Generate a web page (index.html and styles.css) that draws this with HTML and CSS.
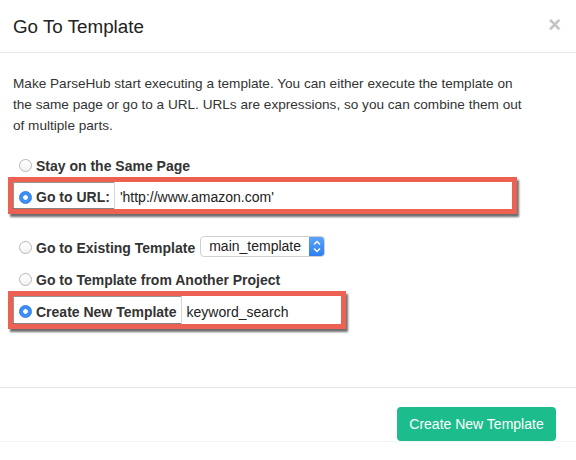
FILE: index.html
```html
<!DOCTYPE html>
<html>
<head>
<meta charset="utf-8">
<link rel="stylesheet" href="styles.css">
</head>
<body>
<div class="modal">
  <div class="header">
    <h4 class="title">Go To Template</h4>
    <span class="close">×</span>
  </div>
  <div class="body">
    <p class="intro">Make ParseHub start executing a template. You can either execute the template on the same page or go to a URL. URLs are expressions, so you can combine them out of multiple parts.</p>
    <div class="row row-stay">
      <span class="radio"></span><span class="label">Stay on the Same Page</span>
    </div>
    <div class="row hl hl-url">
      <span class="radio on"></span><span class="label">Go to URL:</span>
      <span class="input grow">'http://www.amazon.com'</span>
    </div>
    <div class="row row-existing">
      <span class="radio"></span><span class="label">Go to Existing Template</span>
      <span class="select"><span class="sel-text">main_template</span><span class="stepper"><svg width="16" height="21" viewBox="0 0 16 21"><path d="M5 8.5 L8 5.5 L11 8.5" fill="none" stroke="#fff" stroke-width="1.4"/><path d="M5 12.5 L8 15.5 L11 12.5" fill="none" stroke="#fff" stroke-width="1.4"/></svg></span></span>
    </div>
    <div class="row row-another">
      <span class="radio"></span><span class="label">Go to Template from Another Project</span>
    </div>
    <div class="row hl hl-new">
      <span class="radio on"></span><span class="label">Create New Template</span>
      <span class="input grow">keyword_search</span>
    </div>
  </div>
  <div class="footer">
    <button class="btn">Create New Template</button>
  </div>
</div>
</body>
</html>
```
FILE: styles.css
```css
html, body {
  margin: 0;
  padding: 0;
  background: #fff;
}
body {
  font-family: "Liberation Sans", Arial, Helvetica, sans-serif;
  color: #333;
  width: 576px;
  height: 460px;
  overflow: hidden;
}
.modal {
  width: 576px;
}
.header {
  height: 53px;
  border-bottom: 1px solid #e8e8e8;
  display: flex;
  align-items: center;
  justify-content: space-between;
  padding: 0 15px 0 13px;
  box-sizing: border-box;
}
.title {
  margin: 0;
  font-size: 18.8px;
  font-weight: normal;
  color: #222;
  padding-top: 2px;
}
.close {
  font-size: 22px;
  font-weight: bold;
  color: #c4c4c4;
  line-height: 1;
  margin-top: -2px;
}
.body {
  padding: 20px 13px 0 13px;
  height: 332px;
  box-sizing: border-box;
}
.intro {
  margin: 0;
  max-width: 516px;
  font-size: 13.6px;
  line-height: 21px;
  color: #333;
}
.row {
  display: flex;
  align-items: center;
  height: 26px;
  padding-left: 6px;
  padding-top: 3px;
  box-sizing: border-box;
}
.row-stay { margin-top: 15px; }
.row-existing { margin-top: 19px; }
.row-another { margin-top: 6px; }
.hl {
  margin-left: -5px;
  border: 5px solid #ec6152;
  box-shadow: 2px 3px 2px rgba(60,60,60,0.75), inset 1px 1px 0 rgba(80,80,80,0.6), inset -2px -1px 0 rgba(80,80,80,0.7);
}
.hl-url {
  margin-top: 0;
  width: 509px;
  height: 37px;
}
.hl-new {
  margin-top: 0;
  width: 338px;
  height: 38px;
}
.radio {
  width: 13px;
  height: 13px;
  border-radius: 50%;
  border: 1px solid #b8b8b8;
  background: linear-gradient(#fff, #f2f2f2);
  box-sizing: border-box;
  flex: none;
  margin-right: 4px;
}
.radio.on {
  border: 1px solid #2f7be6;
  background: radial-gradient(circle, #fff 0 2px, #3d8ff7 2.6px);
}
.label {
  font-weight: bold;
  font-size: 14px;
  color: #333;
  white-space: nowrap;
}
.input {
  align-self: stretch;
  display: flex;
  align-items: center;
  border-left: 1px solid #d6d6d6;
  margin-left: 4px;
  margin-top: -3px;
  padding-top: 3px;
  padding-left: 5px;
  font-size: 14px;
  color: #222;
  background: #fff;
}
.grow { flex: 1; }
.select {
  margin-left: 5px;
  margin-top: -3px;
  display: flex;
  align-items: stretch;
  height: 21px;
  width: 125px;
  border: 1px solid #d0d0d0;
  border-radius: 4px;
  box-sizing: border-box;
  background: #fff;
  overflow: hidden;
}
.sel-text {
  flex: 1;
  font-size: 14px;
  color: #222;
  padding-left: 8px;
  line-height: 19px;
}
.stepper {
  width: 16px;
  background: linear-gradient(#5ea5fb, #2a7df0);
  display: flex;
  align-items: center;
  justify-content: center;
  margin: -1px -1px -1px 0;
}
.footer {
  border-top: 1px solid #e5e5e5;
  box-shadow: 0 1px 0 #f3f3f3;
  display: flex;
  justify-content: flex-end;
  padding: 19px 20px 0 0;
  margin-top: 2px;
}
.btn {
  font-family: "Liberation Sans", Arial, Helvetica, sans-serif;
  font-size: 14px;
  color: #fff;
  background: #1dbc8c;
  border: none;
  border-radius: 4px;
  height: 34px;
  width: 159px;
  padding: 0;
}
```
